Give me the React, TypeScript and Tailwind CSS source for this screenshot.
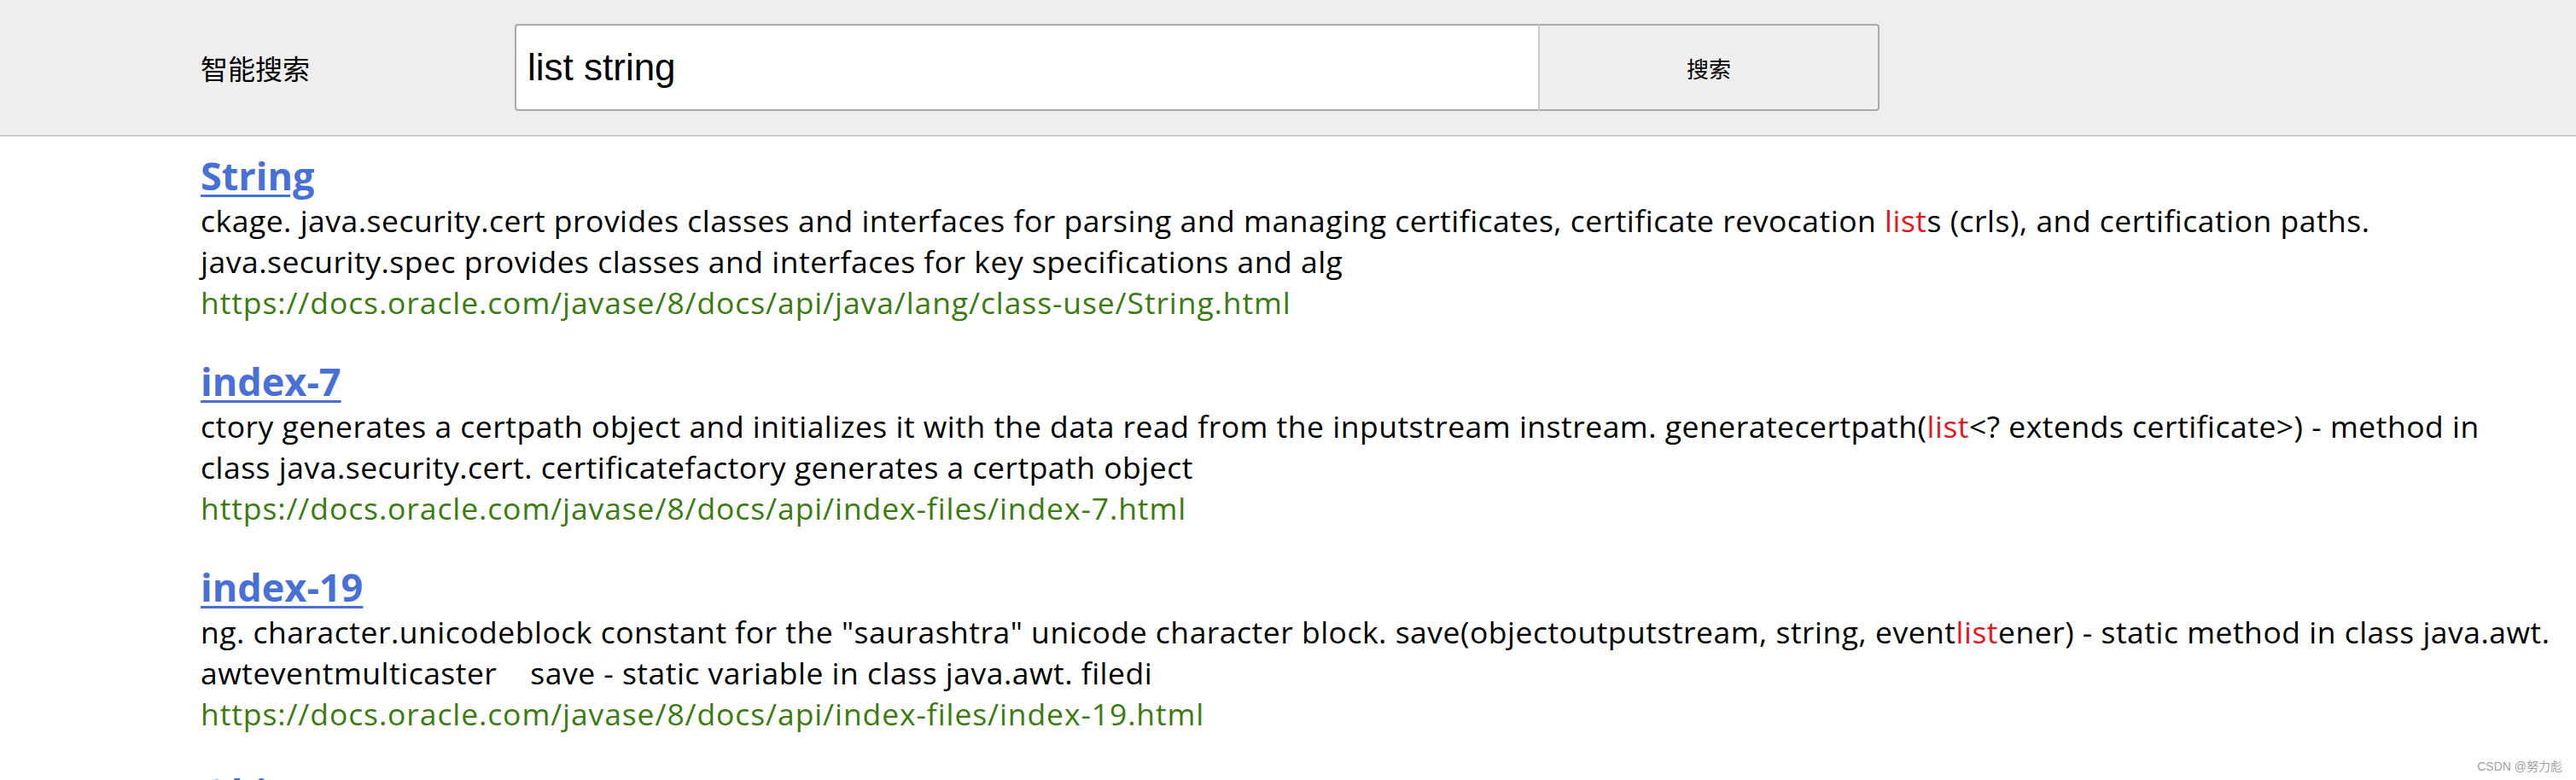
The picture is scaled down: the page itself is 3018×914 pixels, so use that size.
import React from 'react';

type Result = {
    title: string;
    lines: string[];
    url: string;
};

// [..] marks the highlighted keyword
const results: Result[] = [
    {
        title: 'String',
        lines: [
            'ckage. java.security.cert provides classes and interfaces for parsing and managing certificates, certificate revocation [list]s (crls), and certification paths.',
            'java.security.spec provides classes and interfaces for key specifications and alg',
        ],
        url: 'https://docs.oracle.com/javase/8/docs/api/java/lang/class-use/String.html',
    },
    {
        title: 'index-7',
        lines: [
            'ctory generates a certpath object and initializes it with the data read from the inputstream instream. generatecertpath([list]<? extends certificate>) - method in',
            'class java.security.cert. certificatefactory generates a certpath object',
        ],
        url: 'https://docs.oracle.com/javase/8/docs/api/index-files/index-7.html',
    },
    {
        title: 'index-19',
        lines: [
            'ng. character.unicodeblock constant for the "saurashtra" unicode character block. save(objectoutputstream, string, event[list]ener) - static method in class java.awt.',
            'awteventmulticaster\u00a0\u00a0\u00a0 save - static variable in class java.awt. filedi',
        ],
        url: 'https://docs.oracle.com/javase/8/docs/api/index-files/index-19.html',
    },
    {
        title: 'Object',
        lines: [],
        url: '',
    },
];

const Highlighted: React.FC<{ text: string }> = ({ text }) => {
    const parts = text.split(/\[(.+?)\]/);
    return (
        <>
            {parts.map((part, i) =>
                i % 2 === 1 ? (
                    <span key={i} className="text-[#e8141c]">{part}</span>
                ) : (
                    <React.Fragment key={i}>{part}</React.Fragment>
                )
            )}
        </>
    );
};

export default function App() {
    return (
        <div className="relative h-screen overflow-hidden bg-white">
            {/* Search bar */}
            <header className="flex h-[160px] items-center border-b-2 border-[#cccccc] bg-[#eeeeee] pl-[235px]">
                <span className="w-[368px] text-[32px] text-black [font-family:'Noto_Sans_CJK_SC',sans-serif]">
                    智能搜索
                </span>
                <div className="flex h-[102px]">
                    <input
                        readOnly
                        value="list string"
                        className="w-[1199px] rounded-l-[4px] border-2 border-r-0 border-[#aaaaaa] bg-white pl-[13px] text-[44px] text-black outline-none [font-family:'Liberation_Sans',Arial,sans-serif]"
                    />
                    <button className="w-[400px] rounded-r-[4px] border-2 border-[#aaaaaa] border-l-[#cccccc] bg-[#efefef] text-[26px] text-black [font-family:'Noto_Sans_CJK_SC',sans-serif]">
                        搜索
                    </button>
                </div>
            </header>

            {/* Results */}
            <main className="pl-[235px] pt-[18px] [font-family:'Open_Sans',sans-serif]">
                {results.map((r) => (
                    <article key={r.title} className="mb-[41px]">
                        <a
                            href="#"
                            className="block text-[45px] leading-[56px] font-bold text-[#4870d6] underline decoration-[3px] underline-offset-[5px]"
                        >
                            {r.title}
                        </a>
                        <p className="whitespace-nowrap text-[35.5px] leading-[48px] tracking-[0.5px] text-black">
                            {r.lines.map((line, i) => (
                                <React.Fragment key={i}>
                                    <Highlighted text={line} />
                                    {i < r.lines.length - 1 && <br />}
                                </React.Fragment>
                            ))}
                        </p>
                        {r.url && (
                            <div className="text-[35.5px] leading-[48px] tracking-[0.9px] text-[#3a7c10]">{r.url}</div>
                        )}
                    </article>
                ))}
            </main>

            <div className="absolute bottom-[8px] right-[16px] text-[14px] leading-[16px] text-[#a0a0a0] [font-family:'Liberation_Sans','Noto_Sans_CJK_SC',sans-serif]">
                CSDN @努力彪
            </div>
        </div>
    );
}
